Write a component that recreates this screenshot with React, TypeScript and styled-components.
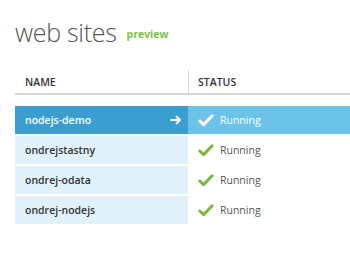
import React from "react";
import styled, { createGlobalStyle } from "styled-components";

const Global = createGlobalStyle`
  html, body { margin: 0; padding: 0; background: #ffffff; }
  body { font-family: "Open Sans", "Noto Sans", sans-serif; overflow: hidden; }
`;

const Page = styled.div`
  width: 350px;
  height: 270px;
  padding: 17px 0 0 15px;
  box-sizing: border-box;
  overflow: hidden;
`;

const TitleRow = styled.div`
  display: flex;
  align-items: baseline;
  gap: 10px;
  height: 30px;
`;

const Title = styled.h1`
  margin: 0;
  font-size: 25px;
  line-height: 30px;
  font-weight: 300;
  color: #555555;
  letter-spacing: -0.3px;
`;

const Preview = styled.span`
  font-size: 10.5px;
  font-weight: 700;
  color: #7cc242;
  position: relative;
  top: -4px;
`;

const Table = styled.div`
  margin-top: 23px;
  width: 335px;
`;

const HeaderRow = styled.div`
  display: grid;
  grid-template-columns: 173px 1fr;
  height: 23px;
  border-bottom: 2px solid #d6d6d6;
`;

const HeaderCell = styled.div<{ $divider?: boolean }>`
  display: flex;
  align-items: center;
  padding-left: ${(p) => (p.$divider ? "9px" : "10px")};
  font-size: 10.5px;
  font-weight: 600;
  color: #333333;
  border-left: ${(p) => (p.$divider ? "1px solid #d6d6d6" : "none")};
`;

const Rows = styled.div`
  margin-top: 11px;
  display: flex;
  flex-direction: column;
  gap: 2px;
`;

const Row = styled.div<{ $selected?: boolean }>`
  display: grid;
  grid-template-columns: 173px 1fr;
  height: 28px;
  background: ${(p) => (p.$selected ? "#6bc3e9" : "transparent")};
`;

const NameCell = styled.div<{ $selected?: boolean }>`
  display: flex;
  align-items: center;
  justify-content: space-between;
  padding: 0 6px 0 10px;
  background: ${(p) => (p.$selected ? "#3b9ed0" : "#e0f1fa")};
  color: ${(p) => (p.$selected ? "#ffffff" : "#333333")};
  font-size: 10.5px;
  font-weight: 600;
`;

const StatusCell = styled.div<{ $selected?: boolean }>`
  display: flex;
  align-items: center;
  gap: 6px;
  padding-left: 10px;
  font-size: 10.5px;
  color: ${(p) => (p.$selected ? "#ffffff" : "#555555")};
`;

const Arrow = () => (
  <svg width="12" height="10" viewBox="0 0 12 10">
    <path d="M1 5 H10 M6.5 1.5 L10 5 L6.5 8.5" fill="none" stroke="#ffffff" strokeWidth="1.8" strokeLinecap="round" strokeLinejoin="round" />
  </svg>
);

const Check = ({ color }: { color: string }) => (
  <svg width="16" height="13" viewBox="0 0 16 13">
    <path d="M1.8 7 L5.6 10.6 L14.2 1.8" fill="none" stroke={color} strokeWidth="3" strokeLinecap="round" strokeLinejoin="round" />
  </svg>
);

const sites = ["nodejs-demo", "ondrejstastny", "ondrej-odata", "ondrej-nodejs"];

export default function App() {
  return (
    <>
      <Global />
      <Page>
        <TitleRow>
          <Title>web sites</Title>
          <Preview>preview</Preview>
        </TitleRow>
        <Table>
          <HeaderRow>
            <HeaderCell>NAME</HeaderCell>
            <HeaderCell $divider>STATUS</HeaderCell>
          </HeaderRow>
          <Rows>
            {sites.map((s, i) => {
              const sel = i === 0;
              return (
                <Row key={s} $selected={sel}>
                  <NameCell $selected={sel}>
                    <span>{s}</span>
                    {sel && <Arrow />}
                  </NameCell>
                  <StatusCell $selected={sel}>
                    <Check color={sel ? "#ffffff" : "#7ab83e"} />
                    <span>Running</span>
                  </StatusCell>
                </Row>
              );
            })}
          </Rows>
        </Table>
      </Page>
    </>
  );
}
